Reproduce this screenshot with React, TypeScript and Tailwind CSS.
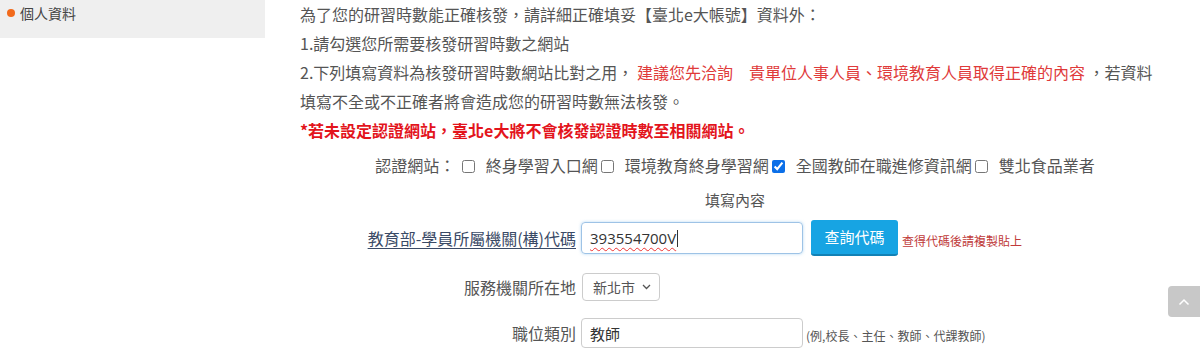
import React from "react";

export default function App() {
  const cb = "ml-[3px] mr-[11px] w-[13px] h-[13px] align-[-1px] accent-[#0b6fe8]";
  return (
    <div className="relative w-[1200px] h-[363px] bg-white overflow-hidden font-['Noto_Sans_CJK_TC',sans-serif] text-[#555]">
      <div className="flex">
        <div className="w-[265px] h-[38px] bg-[#efefef] flex items-start pt-[3px] pl-[7px]">
          <span className="w-[8px] h-[8px] rounded-full bg-[#f26a1b] mt-[6px] mr-[5px]" />
          <span className="text-[14px] leading-[20px] text-[#444]">個人資料</span>
        </div>
        <div className="ml-[35px] w-[870px]">
          <div className="text-[16px] leading-[29px] whitespace-nowrap">
            <div>為了您的研習時數能正確核發，請詳細正確填妥【臺北e大帳號】資料外：</div>
            <div>1.請勾選您所需要核發研習時數之網站</div>
            <div>
              2.下列填寫資料為核發研習時數網站比對之用，
              <span className="text-[#e03a3a]"> 建議您先洽詢　貴單位人事人員、環境教育人員取得正確的內容</span> ，若資料
            </div>
            <div>填寫不全或不正確者將會造成您的研習時數無法核發。</div>
            <div className="text-[#e3141c] font-bold">*若未設定認證網站，臺北e大將不會核發認證時數至相關網站。</div>
          </div>
          <div className="h-[40px] flex items-center justify-center text-[16px] whitespace-nowrap">
            <span>
              認證網站：&nbsp;
              <input type="checkbox" className={cb} readOnly />終身學習入口網
              <input type="checkbox" className={cb} readOnly />環境教育終身學習網
              <input type="checkbox" className={cb} defaultChecked />全國教師在職進修資訊網
              <input type="checkbox" className={cb} readOnly />雙北食品業者
            </span>
          </div>
          <div className="h-[30px] flex items-center justify-center text-[15px]">填寫內容</div>

          <div className="h-[46px] flex items-center">
            <div className="w-[276px] text-right text-[16px]">
              <a className="underline text-[#3a4a66] underline-offset-[3px]">教育部-學員所屬機關(構)代碼</a>
            </div>
            <div className="ml-[5px] w-[222px] h-[32px] border border-[#9ec3e6] rounded-[4px] px-[8px] flex items-center text-[15px] text-[#333] font-['Open_Sans',sans-serif] shadow-[0_0_3px_rgba(102,175,233,0.5)]">
              <span className="underline decoration-wavy decoration-[#e33] decoration-[1px] underline-offset-[3px]">393554700V</span>
              <span className="w-[1px] h-[17px] bg-[#333] ml-[1px]" />
            </div>
            <button className="ml-[8px] w-[87px] h-[36px] bg-[#17a4e3] text-white text-[15px] rounded-[3px] border-b-[2px] border-[#1281b5]">查詢代碼</button>
            <span className="ml-[4px] text-[12px] text-[#c03a3a] mt-[6px]">查得代碼後請複製貼上</span>
          </div>

          <div className="h-[52px] flex items-center">
            <div className="w-[276px] text-right text-[16px]">服務機關所在地</div>
            <div className="relative ml-[6px]">
              <select className="appearance-none w-[78px] h-[28px] border border-[#ccc] rounded-[4px] pl-[10px] text-[14px] text-[#555] bg-white">
                <option>新北市</option>
              </select>
              <svg className="absolute left-[60px] top-[11px]" width="9" height="6" viewBox="0 0 9 6" fill="none">
                <path d="M1 1 L4.5 4.5 L8 1" stroke="#555" strokeWidth="1.3" />
              </svg>
            </div>
          </div>

          <div className="h-[40px] flex items-center">
            <div className="w-[276px] text-right text-[16px]">職位類別</div>
            <input
              defaultValue="教師"
              className="ml-[5px] w-[222px] h-[30px] border border-[#ccc] rounded-[4px] px-[8px] text-[15px] text-[#333] outline-none"
            />
            <span className="ml-[3px] text-[12px] text-[#555] mt-[6px]">(例,校長、主任、教師、代課教師)</span>
          </div>
        </div>
      </div>
      <div className="absolute left-[1168px] top-[286px] w-[32px] h-[31px] bg-[#c8c8c8] rounded-l-[4px] flex items-center justify-center">
        <svg width="12" height="8" viewBox="0 0 12 8" fill="none">
          <path d="M1.5 6.5 L6 2 L10.5 6.5" stroke="white" strokeWidth="1.5" />
        </svg>
      </div>
    </div>
  );
}
